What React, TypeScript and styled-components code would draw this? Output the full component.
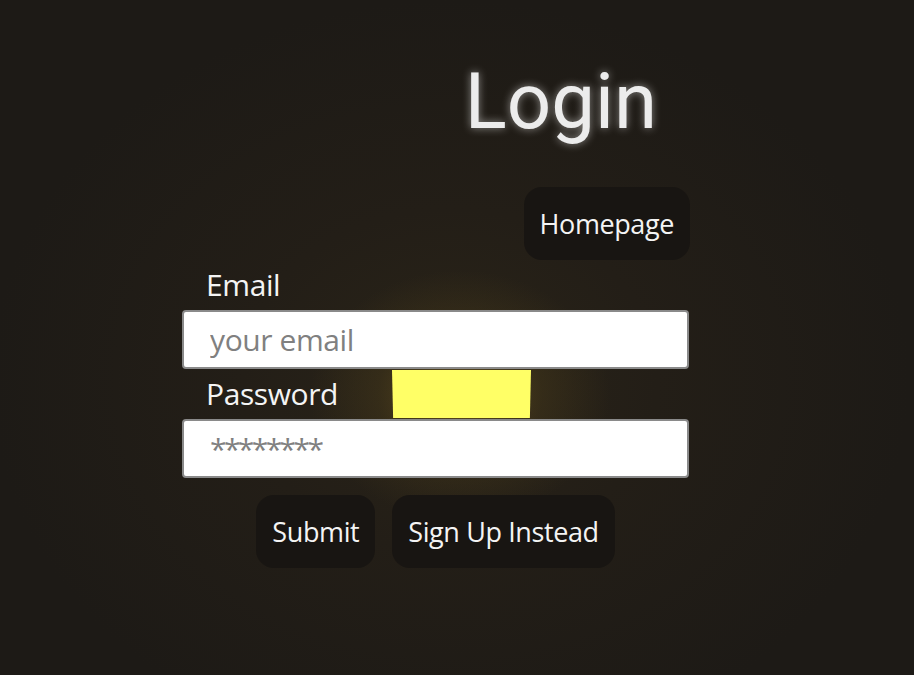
import styled, { createGlobalStyle } from "styled-components";

const GlobalStyle = createGlobalStyle`
  html, body {
    margin: 0;
    padding: 0;
    height: 100%;
  }
  body {
    font-family: "Open Sans", "Noto Sans", sans-serif;
    background: #1c1915;
    color: #f2f2f2;
  }
`;

const App = () => {
  return (
    <>
      <GlobalStyle />
      <Page>
        <Glow />
        <Card>
          <Header>
            <Title>Login</Title>
          </Header>
          <TopRow>
            <Button>Homepage</Button>
          </TopRow>
          <Form onSubmit={(e) => e.preventDefault()}>
            <Label htmlFor="email">Email</Label>
            <Input id="email" type="email" placeholder="your email" />
            <Label htmlFor="password">Password</Label>
            <Input id="password" type="password" placeholder="********" $masked />
            <Highlight />
            <Actions>
              <Button type="submit">Submit</Button>
              <Button type="button">Sign Up Instead</Button>
            </Actions>
          </Form>
        </Card>
      </Page>
    </>
  );
};

export default App;

const Page = styled.div`
  position: relative;
  width: 914px;
  height: 675px;
  overflow: hidden;
  background: radial-gradient(
    ellipse 460px 380px at 450px 380px,
    #2a2418 0%,
    #231e17 45%,
    #1d1a16 100%
  );
`;

const Glow = styled.div`
  position: absolute;
  left: 310px;
  top: 270px;
  width: 300px;
  height: 250px;
  border-radius: 50%;
  background: radial-gradient(
    closest-side,
    rgba(140, 110, 35, 0.55),
    rgba(100, 80, 28, 0.22) 55%,
    rgba(0, 0, 0, 0) 100%
  );
  pointer-events: none;
`;

const Card = styled.div`
  position: relative;
  width: 507px;
  margin-left: 182px;
  padding-top: 52px;
  display: flex;
  flex-direction: column;
`;

const Header = styled.div`
  display: flex;
  justify-content: flex-end;
  padding-right: 32px;
`;

const Title = styled.h1`
  margin: 0;
  font-family: Roboto, "Open Sans", sans-serif;
  font-weight: 400;
  font-size: 78px;
  line-height: 100px;
  color: #ececec;
  text-shadow: 0 0 9px rgba(255, 255, 255, 0.5);
`;

const TopRow = styled.div`
  display: flex;
  justify-content: flex-end;
  margin-top: 35px;
  margin-right: -1px;
`;

const Button = styled.button`
  font-family: "Open Sans", "Noto Sans", sans-serif;
  font-size: 27px;
  color: #f4f4f4;
  background: #181512;
  border: none;
  border-radius: 18px;
  height: 73px;
  padding: 0 16px;
  cursor: pointer;
  letter-spacing: -0.4px;
`;

const Form = styled.form`
  position: relative;
  display: flex;
  flex-direction: column;
`;

const Label = styled.label`
  font-size: 30px;
  line-height: 50px;
  padding-left: 24px;
  color: #f4f4f4;
  letter-spacing: -0.4px;
`;

const Input = styled.input<{ $masked?: boolean }>`
  box-sizing: border-box;
  width: 507px;
  height: 59px;
  border: 2px solid #8a8a8a;
  border-radius: 4px;
  padding: 0 26px;
  font-family: "Open Sans", "Noto Sans", sans-serif;
  font-size: 30px;
  background: #ffffff;
  color: #222;
  outline: none;
  letter-spacing: ${(p) => (p.$masked ? "-2.6px" : "-0.4px")};

  &::placeholder {
    color: #808080;
  }
`;

const Highlight = styled.div`
  position: absolute;
  left: 210px;
  top: 110px;
  width: 139px;
  height: 48px;
  background: #ffff66;
  clip-path: polygon(0 0, 100% 0, 99.2% 100%, 0.8% 100%);
`;

const Actions = styled.div`
  display: flex;
  justify-content: center;
  gap: 17px;
  margin-top: 17px;
`;
